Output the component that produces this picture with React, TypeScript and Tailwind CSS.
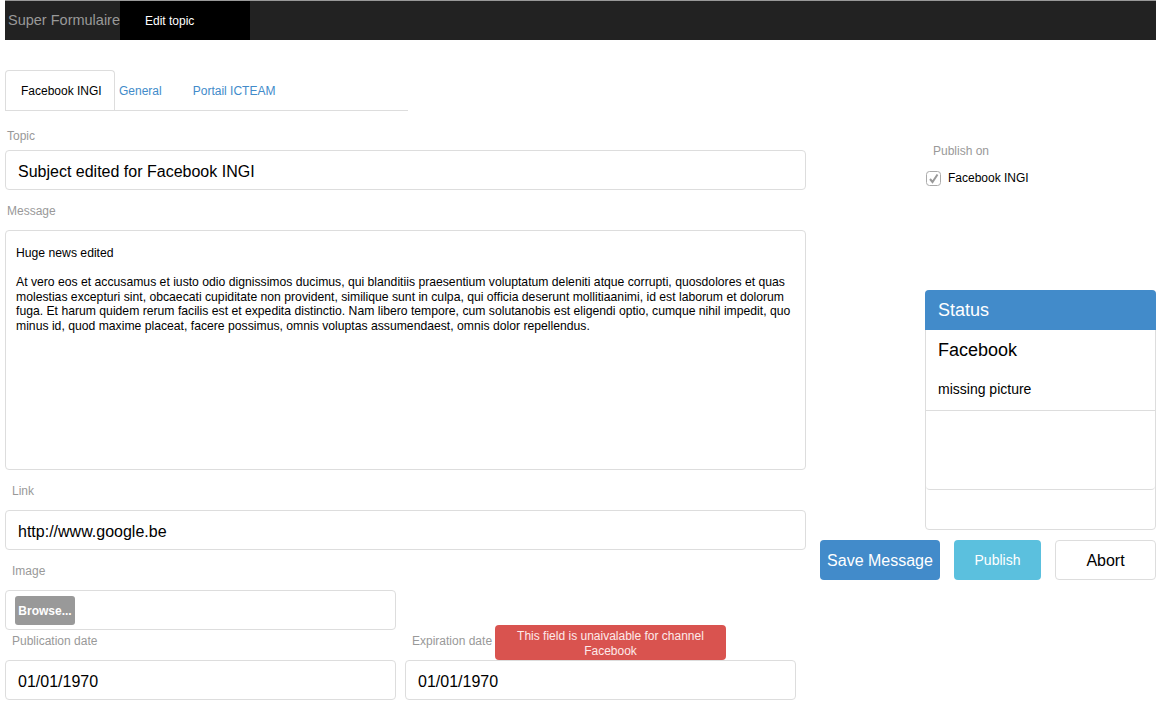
import React from "react";

const labelCls = "text-xs leading-[20px] text-[#999]";
const inputCls =
  "h-[40px] border border-[#ddd] rounded-[4px] flex items-center pl-[12px] pt-[3px] text-base text-black bg-white";

const CheckIcon = () => (
  <svg width="15" height="15" viewBox="0 0 15 15">
    <rect x="0.5" y="0.5" width="14" height="14" rx="3" fill="#fff" stroke="#aaa" />
    <path d="M4 8 L6.5 11 L11.5 3.5" stroke="#999" strokeWidth="2" fill="none" />
  </svg>
);

export default function App() {
  return (
    <div
      className="w-[1156px] h-[701px] overflow-hidden pl-[5px] bg-white"
      style={{ fontFamily: '"Liberation Sans", Arial, sans-serif' }}
    >
      {/* Navbar */}
      <div className="h-[40px] bg-[#222] border-t border-[#999] flex">
        <div className="text-[14.5px] text-[#999] pl-[3px] w-[115px] flex items-center">
          Super Formulaire
        </div>
        <div className="w-[130px] bg-black text-xs text-white pl-[25px] flex items-center">
          Edit topic
        </div>
      </div>

      <div className="flex">
        {/* Left column */}
        <div className="w-[801px]">
          {/* Tabs */}
          <div className="mt-[30px] h-[41px] w-[403px] border-b border-[#ddd] flex text-xs">
            <div className="w-[110px] border border-b-0 border-[#ddd] rounded-t-[4px] flex items-center pl-[15px] pt-[1px] text-black">
              Facebook INGI
            </div>
            <div className="pl-[4px] pt-[1px] flex items-center text-[#428bca]">General</div>
            <div className="pl-[31px] pt-[1px] flex items-center text-[#428bca]">Portail ICTEAM</div>
          </div>

          <div className={`${labelCls} pl-[2px] pt-[15px] h-[39px]`}>Topic</div>
          <div className={inputCls}>Subject edited for Facebook INGI</div>

          <div className={`${labelCls} pl-[2px] pt-[11px] h-[40px]`}>Message</div>
          <div className="h-[240px] border border-[#ddd] rounded-[4px] pl-[10px] pr-[8px] pt-[15px] text-[12.2px] leading-[14.5px] text-black">
            Huge news edited
            <br />
            <br />
            At vero eos et accusamus et iusto odio dignissimos ducimus, qui blanditiis praesentium voluptatum deleniti atque corrupti, quosdolores et quas
            <br />
            molestias excepturi sint, obcaecati cupiditate non provident, similique sunt in culpa, qui officia deserunt mollitiaanimi, id est laborum et dolorum
            <br />
            fuga. Et harum quidem rerum facilis est et expedita distinctio. Nam libero tempore, cum solutanobis est eligendi optio, cumque nihil impedit, quo
            <br />
            minus id, quod maxime placeat, facere possimus, omnis voluptas assumendaest, omnis dolor repellendus.
          </div>

          <div className={`${labelCls} pl-[7px] pt-[11px] h-[40px]`}>Link</div>
          <div className={inputCls}>http://www.google.be</div>

          <div className={`${labelCls} pl-[7px] pt-[11px] h-[40px]`}>Image</div>
          <div className="w-[391px] h-[40px] border border-[#ddd] rounded-[4px] pl-[9px] pt-[5px]">
            <div className="w-[60px] h-[29px] bg-[#999] rounded-[3px] text-white text-xs font-bold flex items-center justify-center">
              Browse...
            </div>
          </div>

          <div className="flex gap-[9px]">
            <div className="w-[391px]">
              <div className={`${labelCls} pl-[7px] pt-[1px] h-[30px]`}>Publication date</div>
              <div className={inputCls}>01/01/1970</div>
            </div>
            <div className="w-[391px] relative">
              <div className={`${labelCls} pl-[7px] pt-[1px] h-[30px]`}>Expiration date</div>
              <div className={inputCls}>01/01/1970</div>
              <div className="absolute left-[90px] top-[-5px] w-[231px] h-[35px] bg-[#d9534f] rounded-[4px] text-xs leading-[15px] text-[#fdeaea] text-center pt-[4px]">
                This field is unaivalable for channel
                <br />
                Facebook
              </div>
            </div>
          </div>
        </div>

        {/* Right column */}
        <div className="ml-[14px] w-[336px]">
          <div className="pl-[106px] pt-[101px]">
            <div className={`${labelCls} pl-[7px]`}>Publish on</div>
            <div className="mt-[7px] h-[20px] flex items-center gap-[7px] text-xs text-black">
              <CheckIcon />
              Facebook INGI
            </div>
          </div>

          <div className="ml-[105px] mt-[102px] w-[231px] h-[240px] border border-[#ddd] rounded-[4px]">
            <div className="h-[200px] border-b border-[#ddd] rounded-b-[4px]">
              <div className="h-[40px] -mt-px -mx-px bg-[#428bca] rounded-t-[4px] text-lg text-white pl-[13px] flex items-center">
                Status
              </div>
              <div className="border-b border-[#ddd] pl-[12px] pt-[9px] pb-[11px]">
                <div className="text-lg leading-[22px] text-black">Facebook</div>
                <div className="mt-[18px] text-sm leading-[20px] text-black">missing picture</div>
              </div>
            </div>
          </div>

          <div className="mt-[10px] flex gap-[14px]">
            <div className="w-[120px] h-[40px] bg-[#428bca] rounded-[4px] text-white text-base pt-[1px] flex items-center justify-center">
              Save Message
            </div>
            <div className="w-[87px] h-[40px] bg-[#5bc0de] rounded-[4px] text-white text-sm flex items-center justify-center">
              Publish
            </div>
            <div className="w-[101px] h-[40px] bg-white border border-[#ddd] rounded-[4px] text-black text-base pt-[1px] flex items-center justify-center">
              Abort
            </div>
          </div>
        </div>
      </div>
    </div>
  );
}
